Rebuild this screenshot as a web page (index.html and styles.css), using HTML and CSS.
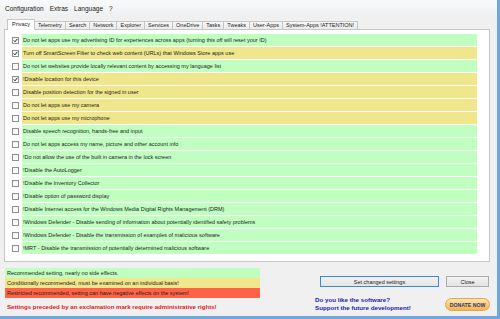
FILE: index.html
```html
<!DOCTYPE html>
<html lang="en">
<head>
  <meta charset="UTF-8">
  <title>Privacy settings</title>
  <link rel="stylesheet" href="styles.css">
</head>
<body>
  <div class="window">
    <!-- menu bar -->
    <ul class="menu">
      <li>Configuration</li>
      <li>Extras</li>
      <li>Language</li>
      <li>?</li>
    </ul>

    <!-- tabs -->
    <div class="tabs">
      <span class="tab active">Privacy</span>
      <span class="tab">Telemetry</span>
      <span class="tab">Search</span>
      <span class="tab">Network</span>
      <span class="tab">Explorer</span>
      <span class="tab">Services</span>
      <span class="tab">OneDrive</span>
      <span class="tab">Tasks</span>
      <span class="tab">Tweaks</span>
      <span class="tab">User-Apps</span>
      <span class="tab">System-Apps !ATTENTION!</span>
    </div>

    <!-- settings list -->
    <div class="panel">
      <div class="row"><span class="cb on"><svg viewBox="0 0 5 5"><path d="M0.8 2.4 L2 3.8 L4.3 0.9"/></svg></span><span class="label green">Do not let apps use my advertising ID for experiences across apps (turning this off will reset your ID)</span></div>
      <div class="row"><span class="cb on"><svg viewBox="0 0 5 5"><path d="M0.8 2.4 L2 3.8 L4.3 0.9"/></svg></span><span class="label yellow">Turn off SmartScreen Filter to check web content (URLs) that Windows Store apps use</span></div>
      <div class="row"><span class="cb"></span><span class="label green">Do not let websites provide locally relevant content by accessing my language list</span></div>
      <div class="row"><span class="cb on"><svg viewBox="0 0 5 5"><path d="M0.8 2.4 L2 3.8 L4.3 0.9"/></svg></span><span class="label yellow">!Disable location for this device</span></div>
      <div class="row"><span class="cb"></span><span class="label yellow">Disable position detection for the signed in user</span></div>
      <div class="row"><span class="cb"></span><span class="label yellow">Do not let apps use my camera</span></div>
      <div class="row"><span class="cb"></span><span class="label yellow">Do not let apps use my microphone</span></div>
      <div class="row"><span class="cb"></span><span class="label green">Disable speech recognition, hands-free and input</span></div>
      <div class="row"><span class="cb"></span><span class="label green">Do not let apps access my name, picture and other account info</span></div>
      <div class="row"><span class="cb"></span><span class="label green">!Do not allow the use of the built in camera in the lock screen</span></div>
      <div class="row"><span class="cb"></span><span class="label green">!Disable the AutoLogger</span></div>
      <div class="row"><span class="cb"></span><span class="label green">!Disable the Inventory Collector</span></div>
      <div class="row"><span class="cb"></span><span class="label green">!Disable option of password display</span></div>
      <div class="row"><span class="cb"></span><span class="label green">!Disable Internet access for the Windows Media Digital Rights Management (DRM)</span></div>
      <div class="row"><span class="cb"></span><span class="label green">!Windows Defender - Disable sending of information about potentially identified safety problems</span></div>
      <div class="row"><span class="cb"></span><span class="label green">!Windows Defender - Disable the transmission of examples of malicious software</span></div>
      <div class="row"><span class="cb"></span><span class="label green">!MRT - Disable the transmission of potentially determined malicious software</span></div>
    </div>

    <!-- legend + buttons -->
    <div class="bottom">
      <div class="legend-col">
        <div class="legend green">Recommended setting, nearly no side effects.</div>
        <div class="legend yellow">Conditionally recommended, must be examined on an individual basis!</div>
        <div class="legend red">Restricted recommended, setting can have negative effects on the system!</div>
        <p class="note">Settings preceded by an exclamation mark require administrative rights!</p>
      </div>
      <div class="actions">
        <div class="buttons">
          <button class="btn btn-set">Set changed settings</button>
          <button class="btn btn-close">Close</button>
        </div>
        <div class="donate-row">
          <p class="like">Do you like the software?<br>Support the future development!</p>
          <span class="donate">DONATE NOW</span>
        </div>
      </div>
    </div>
  </div>
</body>
</html>
```

FILE: styles.css
```css
/* reset */
* {
  margin: 0;
  padding: 0;
  box-sizing: border-box;
}
body {
  font-family: 'Liberation Sans', Arial, sans-serif;
  background-color: #f0f0f0;
  color: #222;
  width: 500px;
  height: 319px;
  overflow: hidden;
}
.window {
  width: 500px;
  height: 319px;
  background-color: #f0f0f0;
  border-right: 3px solid #6ea6e0;
  border-bottom: 3px solid #6ea6e0;
}

/* menu bar */
.menu {
  display: flex;
  align-items: center;
  gap: 6px;
  height: 16px;
  padding-left: 5px;
  list-style: none;
  font-size: 6.5px;
  background: linear-gradient(#f8f9fa, #eef0f2);
}

/* tabs */
.tabs {
  display: flex;
  align-items: flex-end;
  height: 13px;
  padding-left: 7px;
}
.tab {
  height: 8px;
  line-height: 7px;
  padding: 0 3px;
  font-size: 5.5px;
  white-space: nowrap;
  background: linear-gradient(#f7f7f7, #ebebeb);
  border: 1px solid #c6c6c6;
  border-bottom: none;
  border-left: none;
}
.tab.active {
  position: relative;
  height: 11px;
  line-height: 9px;
  margin-bottom: -1px;
  padding: 0 4px;
  background: #fff;
  border-left: 1px solid #c6c6c6;
}

/* settings panel */
.panel {
  width: 486px;
  height: 233px;
  margin-left: 4px;
  padding: 4px 12px 0 7px;
  background-color: #fff;
  border: 1px solid #c6c6c6;
}
.row {
  display: flex;
  align-items: center;
  height: 12px;
  margin-bottom: 1px;
}
.cb {
  flex: none;
  display: flex;
  width: 7px;
  height: 7px;
  margin-right: 3px;
  border: 1px solid #8e8f8f;
  background: linear-gradient(#f4f4f4, #fff);
}
.cb svg {
  width: 5px;
  height: 5px;
}
.cb svg path {
  fill: none;
  stroke: #222;
  stroke-width: 1;
}
.label {
  flex: 1;
  height: 12px;
  line-height: 12px;
  padding-left: 1px;
  font-size: 5.5px;
  white-space: nowrap;
  overflow: hidden;
}
.green { background-color: #c0ffc0; }
.yellow { background-color: #f0e68c; }
.red { background-color: #ff6347; }

/* bottom area */
.bottom {
  display: flex;
  padding: 6px 0 0 5px;
}
.legend-col {
  width: 255px;
}
.legend {
  height: 10px;
  line-height: 10px;
  padding-left: 2px;
  font-size: 5.5px;
}
.note {
  margin-top: 5px;
  padding-left: 2px;
  color: #e3161b;
  font-weight: bold;
  font-size: 6.1px;
}
.actions {
  width: 175px;
  margin-left: 55px;
}
.buttons {
  display: flex;
  gap: 7px;
  margin-top: 8px;
  padding-left: 5px;
}
.btn {
  height: 11px;
  font-family: inherit;
  font-size: 5.5px;
  color: #222;
  background: linear-gradient(#f2f2f2, #e4e4e4);
  border: 1px solid #acacac;
}
.btn-set {
  width: 119px;
  border-color: #3c8ad2;
}
.btn-close {
  width: 43px;
}
.donate-row {
  display: flex;
  align-items: center;
  justify-content: space-between;
  margin-top: 9px;
}
.like {
  color: #1c1cae;
  font-weight: bold;
  font-size: 6.2px;
  line-height: 8px;
}
.donate {
  width: 45px;
  height: 13px;
  line-height: 13px;
  border-radius: 7px;
  text-align: center;
  font-size: 5.2px;
  font-weight: bold;
  color: #1f3a78;
  background: linear-gradient(#fde6ad, #f8b24c);
  border: 1px solid #e8a44a;
}
```
